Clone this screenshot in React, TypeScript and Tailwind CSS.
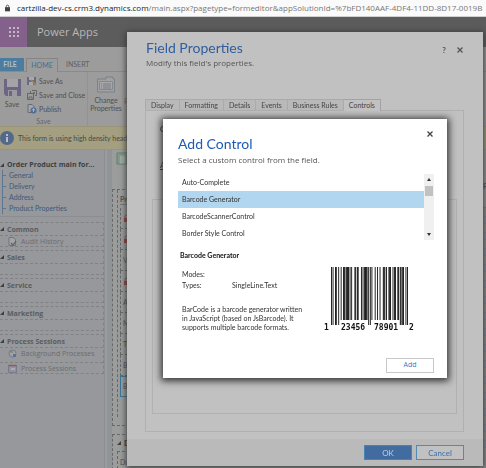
import type { ReactNode } from "react";

const L_CODES = [
  "0001101", "0011001", "0010011", "0111101", "0100011",
  "0110001", "0101111", "0111011", "0110111", "0001011",
];
const invert = (bits: string) => [...bits].map((b) => (b === "1" ? "0" : "1")).join("");

/** UPC-A symbol: guards and the outer digits have the longer bars. */
function Barcode({ value }: { value: string }) {
  const digits = [...value].map(Number);
  const left = digits.slice(0, 6).map((d) => L_CODES[d]).join("");
  const right = digits.slice(6).map((d) => invert(L_CODES[d])).join("");
  const bits = "101" + left + "01010" + right + "101";
  const isLong = (i: number) => i < 10 || i > 84 || (i >= 45 && i < 50);
  return (
    <svg viewBox="0 0 92 66" className="h-[66px] w-[92px]" role="img" aria-label={"Barcode " + value}>
      <g transform="translate(7 0) scale(0.81 1)">
        {[...bits].map((b, i) =>
          b === "1" ? <rect key={i} x={i} y={0} width={1.05} height={isLong(i) ? 58 : 53} fill="#000" /> : null,
        )}
      </g>
      <g fill="#111" fontSize="8" fontWeight="700" fontFamily="'DejaVu Sans Mono', monospace">
        <text x="0" y="63">{value[0]}</text>
        <text x="17" y="63">{value.slice(1, 6)}</text>
        <text x="50" y="63">{value.slice(6, 11)}</text>
        <text x="85" y="63">{value[11]}</text>
      </g>
    </svg>
  );
}

function LockIcon() {
  return (
    <svg viewBox="0 0 8 8" className="size-2">
      <path d="M2 4V2.5a1.5 1.5 0 0 1 3 0" fill="none" stroke="#8d5555" />
      <rect x="1" y="4" width="6" height="4" fill="#9b3d3d" />
    </svg>
  );
}

function SaveIcon() {
  return (
    <svg viewBox="0 0 17 17" className="size-[17px]">
      <path d="M0 0h17v17H2L0 15z" fill="#6d6584" />
      <path d="M3 0h11v8H3z" fill="#a3a3a8" />
      <path d="M4 11h9v6H4z" fill="#9a9aa0" />
      <path d="M5 12h3v5H5z" fill="#6d6584" />
    </svg>
  );
}

function SaveAsIcon() {
  return (
    <svg viewBox="0 0 10 10" className="size-[10px]">
      <path d="M0 1h9v8H0z" fill="#6a6a88" />
      <path d="M2 1h5v3H2zM2 6h4v3H2z" fill="#a9a9ad" />
      <path d="M4 4l5 5" stroke="#a08a45" strokeWidth="1.5" />
    </svg>
  );
}

function SaveCloseIcon() {
  return (
    <svg viewBox="0 0 10 10" className="size-[10px]" fill="none" stroke="#666">
      <path d="M.5 3.500h6v6h-6zM2 9V7h3v2M3.500 3V1M5 .5h4.500v5H8" />
      <path d="M6 3h2M7 2v2" />
    </svg>
  );
}

function PublishIcon() {
  return (
    <svg viewBox="0 0 10 10" className="size-[10px]">
      <path d="M1 .5h4l2 2v6H1z" fill="#a5a5a8" stroke="#666c78" />
      <circle cx="6.500" cy="6.500" r="3" fill="#4d6b94" />
      <path d="M5 6.500l1.500-2 1.500 2M6.500 5v3" stroke="#a9b4c2" fill="none" />
    </svg>
  );
}

function PropertiesIcon() {
  return (
    <svg viewBox="0 0 18 17" className="h-[17px] w-[18px]">
      <path d="M9 3V1h7v2h1.500v13H.5V3z" fill="#9fa1a3" stroke="#7b8288" />
      <path d="M2.500 5.500h13v8h-13z" fill="#a8a8a8" stroke="#85898d" />
      <path d="M4 8h1M6 8h8M4 10h1M6 10h8M4 12h1M6 12h8" stroke="#747d85" />
    </svg>
  );
}

function NavIcon({ kind }: { kind: string }) {
  if (kind === "audit")
    return (
      <svg viewBox="0 0 9 9" className="size-[9px]">
        <path d="M1 .5h4l2.500 2v6H1z" fill="#a3a5a5" stroke="#737577" />
        <path d="M3 6l2 2 3-4" fill="none" stroke="#5c6064" strokeWidth="1.200" />
      </svg>
    );
  if (kind === "process")
    return (
      <svg viewBox="0 0 9 9" className="size-[9px]">
        <circle cx="4.500" cy="4.500" r="3.500" fill="#9da3a9" stroke="#6f7f93" />
        <path d="M1 3l3-2 1 3z" fill="#9a7c55" />
        <path d="M5 5h3v3H5z" fill="#5c7296" />
      </svg>
    );
  return (
    <svg viewBox="0 0 9 9" className="size-[9px]">
      <path d="M.5 1.500h8v7h-8z" fill="#8f91a0" stroke="#777b88" />
      <path d="M.5 1.500h8" stroke="#8c5d60" strokeWidth="1.500" />
      <path d="M3 5h4" stroke="#a9abb5" strokeWidth="2" />
    </svg>
  );
}

function Triangle() {
  return (
    <svg viewBox="0 0 4 4" className="size-1 shrink-0">
      <path d="M4 0v4H0z" fill="#3f3f3f" />
    </svg>
  );
}

function CloseIcon({ color }: { color: string }) {
  return (
    <svg viewBox="0 0 6 6" className="size-[6px]">
      <path d="M.5 .5l5 5M5.500 .5l-5 5" stroke={color} strokeWidth="1.300" />
    </svg>
  );
}

function NavGroup({ title, children }: { title: string; children?: ReactNode }) {
  return (
    <section className="mb-[3px] border-y border-r border-dashed border-[#808284]">
      <h3 className="flex h-3 items-center gap-[3px] font-bold text-[#5a5c5e]">
        <Triangle />
        {title}
      </h3>
      <div className="border-t border-dashed border-[#808284]">{children ?? <div className="h-[10px]" />}</div>
    </section>
  );
}

function NavLink({ kind, children }: { kind: string; children: ReactNode }) {
  return (
    <a href="#" className="flex h-[10px] items-center gap-1 pl-2 text-[#6b6d6f]">
      <NavIcon kind={kind} />
      {children}
    </a>
  );
}

function Sidebar() {
  const links = ["General", "Delivery", "Address", "Product Properties"];
  return (
    <nav className="w-[105px] shrink-0 border-r border-[#8b8d90] bg-[#96989b] pt-[9px] font-['Open_Sans','Noto_Sans',sans-serif] text-[7px] leading-[11px] whitespace-nowrap">
      <h2 className="flex items-center gap-[3px] text-[7px] font-bold text-[#3d3f41]">
        <Triangle />
        Order Product main for...
      </h2>
      <ul className="ml-[2px] border-l border-[#5c7591] font-[Lato,sans-serif]">
        {links.map((l) => (
          <li key={l} className="flex items-center gap-[3px]">
            <span className="h-px w-[3px] bg-[#5c7591]" />
            <a href="#" className="text-[#3f5878]">{l}</a>
          </li>
        ))}
      </ul>
      <div className="mt-[2px] mb-[5px] border-t border-[#8b8d90]" />
      <NavGroup title="Common"><NavLink kind="audit">Audit History</NavLink></NavGroup>
      <NavGroup title="Sales" />
      <NavGroup title="Service" />
      <NavGroup title="Marketing" />
      <NavGroup title="Process Sessions">
        <NavLink kind="process">Background Processes</NavLink>
        <div className="mt-1 border-t border-dashed border-[#808284]">
          <NavLink kind="session">Process Sessions</NavLink>
        </div>
      </NavGroup>
    </nav>
  );
}

const FIELDS = ["lock", "lock", "V", "lock", "A", "M", "T", "B"];

function FormCanvas() {
  return (
    <main className="flex min-w-0 flex-1 bg-[#9b9d9d] pl-[2px] text-[7px] text-[#505050]">
      <div className="w-[5px] shrink-0 bg-[#909497]" />
      <div className="min-w-0 flex-1">
        <div className="flex h-[39px] items-start pt-[2px] pl-1">
          <svg viewBox="0 0 12 14" className="h-[14px] w-3">
            <path d="M1 1h10v11H1z" fill="#939c95" stroke="#4f8562" />
            <path d="M3 3h5l2 2v7H3z" fill="#a1a9a2" stroke="#6f9079" />
          </svg>
        </div>
        <section className="h-[237px] border border-dashed border-[#686868] pb-2 pl-1">
          <div className="h-full border-l border-dashed border-[#686868] pt-1 pl-[2px]">
            <h3 className="mb-[3px] border-b border-[#777] leading-[10px] font-bold">Product</h3>
            {FIELDS.map((f, i) => (
              <div key={i} className="flex h-[21px] items-center border-b border-l border-dashed border-[#686868] pl-[2px]">
                {f === "lock" ? <LockIcon /> : f}
              </div>
            ))}
            <div className="flex h-[21px] items-center border border-[#39779a] pl-[2px]">B</div>
          </div>
        </section>
        <section className="mt-2 border border-dashed border-[#686868] pl-1">
          <h3 className="flex h-4 items-center gap-[3px] text-[8px] font-bold text-[#333]"><Triangle />Details</h3>
          <div className="h-[18px] border-t border-l border-dashed border-[#686868] pt-[5px] pl-[2px] leading-[10px]">Due</div>
        </section>
      </div>
      <aside className="w-[3px] shrink-0 overflow-hidden bg-[#8e8e8e]">
        <div className="h-[58px] border-b border-[#7b7b7b] bg-[#999] pt-8 leading-[8px] font-bold">F</div>
        {Array.from({ length: 15 }, (_, i) => (
          <div key={i} className="mt-2 h-2 border-y border-[#7d8390] bg-[#858b9b]" />
        ))}
      </aside>
    </main>
  );
}

function Ribbon() {
  const small = "flex items-center gap-[2px]";
  return (
    <div className="bg-[#9c9c9c] pt-[11px] whitespace-nowrap text-[#505050]">
      <div className="flex h-[14px] border-b border-[#8a8a8a] text-[7px]">
        <button className="w-6 bg-[#4a7d9f] pr-1 text-[7px] font-bold text-[#b3bfc7]">FILE</button>
        <button className="mb-[-1px] ml-[2px] w-8 border border-b-0 border-[#858585] bg-[#9c9c9c] text-[#3f6f95]">HOME</button>
        <button className="ml-2 text-[#606060]">INSERT</button>
      </div>
      <div className="flex h-[54px] text-[7px] leading-[8px]">
        <div className="flex w-[88px] flex-col border-r border-[#929292]">
          <div className="flex flex-1 pt-1">
            <button className="flex h-[34px] w-6 flex-col items-center gap-1 pt-[3px]">
              <SaveIcon />
              Save
            </button>
            <div className="ml-[3px] flex flex-col gap-1">
              <button className={small}><SaveAsIcon />Save As</button>
              <button className={small}><SaveCloseIcon />Save and Close</button>
              <button className={small}><PublishIcon />Publish</button>
            </div>
          </div>
          <p className="pb-px text-center text-[#666]">Save</p>
        </div>
        <button className="flex w-9 flex-col items-center gap-[3px] pt-1">
          <PropertiesIcon />
          <span>Change<br />Properties</span>
        </button>
        <button className="pt-1 text-[#666]">Remove</button>
      </div>
    </div>
  );
}

const TABS = ["Display", "Formatting", "Details", "Events", "Business Rules", "Controls"];
const CONTROLS = ["Auto-Complete", "Barcode Generator", "BarcodeScannerControl", "Border Style Control"];

function AddControlDialog() {
  return (
    <div role="dialog" aria-label="Add Control" className="absolute top-[87px] right-9 bottom-[88px] left-9 flex flex-col bg-white pr-[13px] pl-[15px] text-[7px] text-[#333] shadow-[0_1px_7px_2px_#333]">
      <header className="flex items-start justify-between pt-[14px]">
        <div>
          <h2 className="text-[14px] leading-[22px] text-[#1b5cb4]">Add Control</h2>
          <p className="font-['Open_Sans','Noto_Sans',sans-serif] text-[8px] leading-[10px] text-[#555]">Select a custom control from the field.</p>
        </div>
        <button aria-label="Close" className="-mt-[2px] pr-px"><CloseIcon color="#444" /></button>
      </header>
      <div className="mt-[9px] flex">
        <ul className="min-w-0 flex-1">
          {CONTROLS.map((c) => (
            <li key={c}>
              <button className={"flex h-[17px] w-full items-center pl-1 " + (c === "Barcode Generator" ? "bg-[#b1d6f0]" : "")}>{c}</button>
            </li>
          ))}
        </ul>
        <div className="mb-[2px] flex w-[10px] flex-col items-center bg-[#f0f0f0] py-1">
          <svg viewBox="0 0 4 3" className="h-[3px] w-1"><path d="M2 0l2 3H0z" fill="#333" /></svg>
          <div className="mt-[5px] h-[10px] w-2 bg-[#c1c1c1]" />
          <svg viewBox="0 0 4 3" className="mt-auto h-[3px] w-1"><path d="M2 3l2-3H0z" fill="#333" /></svg>
        </div>
      </div>
      <h3 className="mt-2 pl-[2px] leading-[10px] font-bold text-[#111]">Barcode Generator</h3>
      <div className="flex flex-1 justify-between pr-[18px] pl-1">
        <div className="pt-[9px]">
          <dl className="grid grid-cols-[50px_1fr] leading-[11px]">
            <dt>Modes:</dt><dd />
            <dt>Types:</dt><dd>SingleLine.Text</dd>
          </dl>
          <p className="mt-[14px] w-[122px] leading-[9px]">
            BarCode is a barcode generator written in JavaScript (based on JsBarcode). It supports multiple barcode formats.
          </p>
        </div>
        <div className="pt-[7px]"><Barcode value="123456789012" /></div>
      </div>
      <button className="mb-[5px] h-[15px] w-12 self-end border border-[#c8c8c8] bg-white font-['Open_Sans','Noto_Sans',sans-serif] text-[#3b73d1]">Add</button>
    </div>
  );
}

function FieldProperties() {
  return (
    <div role="dialog" aria-label="Field Properties" className="fixed top-8 right-[3px] bottom-[2px] left-[127px] flex flex-col bg-[#c1c1c1] shadow-[0_1px_6px_1px_#3a3a3a]">
      <header className="flex items-start justify-between pt-[5px] pr-5 pl-[19px]">
        <div>
          <h1 className="text-[14px] leading-[21px] text-[#2f5d9f]">Field Properties</h1>
          <p className="font-['Open_Sans','Noto_Sans',sans-serif] text-[8px] leading-[10px] text-[#555]">Modify this field's properties.</p>
        </div>
        <div className="mt-2 flex items-center gap-[11px]">
          <button aria-label="Help" className="text-[8px] leading-[10px] font-bold text-[#555]">?</button>
          <button aria-label="Close"><CloseIcon color="#555" /></button>
        </div>
      </header>
      <div className="mt-[31px] ml-[18px] flex h-3 text-[7px] whitespace-nowrap text-[#444]" role="tablist">
        {TABS.map((t) => (
          <button
            key={t}
            role="tab"
            aria-selected={t === "Controls"}
            className={
              "border-t border-r px-[5px] first:border-l " +
              (t === "Controls" ? "relative z-10 border-[#a2a2a2] bg-[#c1c1c1]" : "border-[#aaa] bg-[#b9b9b9]")
            }
          >
            {t}
          </button>
        ))}
      </div>
      <div className="-mt-px mr-[19px] mb-[7px] ml-[18px] flex flex-1 flex-col border border-[#b0b0b0] px-[6px] pb-[17px]">
        <div className="h-[88px] pt-3 pl-2 text-[8px] leading-[12px] text-[#333]">
          <p className="font-bold">Control</p>
          <a href="#" className="mt-6 block underline">Add</a>
        </div>
        <div className="flex-1 border border-[#b1b1b1]" />
      </div>
      <footer className="flex h-[27px] gap-1 bg-[#bababa] pt-[6px] pr-[19px] text-[8px]">
        <button className="ml-auto h-[15px] w-12 border border-[#4a83b2] bg-[#426ca0] text-[#c4ccd6]">OK</button>
        <button className="h-[15px] w-12 border border-[#4f8ab8] bg-[#c1c1c1] text-[#3d70aa]">Cancel</button>
      </footer>
      <AddControlDialog />
    </div>
  );
}

export default function App() {
  return (
    <div className="flex h-screen min-h-[460px] flex-col overflow-hidden font-[Lato,sans-serif]">
      <div className="flex h-[17px] shrink-0 items-center gap-[7px] overflow-hidden border-b border-[#d0d0d0] bg-[#fafafa] pl-[5px] font-['Open_Sans','Noto_Sans',sans-serif] text-[8px] whitespace-nowrap">
        <svg viewBox="0 0 6 8" className="h-2 w-[5px] shrink-0">
          <path d="M1.500 3.500V2a1.500 1.500 0 0 1 3 0v1.500" fill="none" stroke="#444" />
          <path d="M0 3h6v5H0z" fill="#444" />
        </svg>
        <p className="text-[#777]">
          <span className="text-[#222]">cartzilla-dev-cs.crm3.dynamics.com</span>
          /main.aspx?pagetype=formeditor&amp;appSolutionId=%7bFD140AAF-4DF4-11DD-8D17-0019B
        </p>
      </div>
      <header className="flex h-[30px] shrink-0 items-center bg-[#5c5c5c]">
        <button aria-label="App launcher" className="grid h-full w-[27px] place-items-center bg-[#83618a]">
          <svg viewBox="0 0 10 10" className="size-[10px]" fill="#c4b6c6">
            {[0, 4, 8].map((y) => [0, 4, 8].map((x) => <rect key={x + "-" + y} x={x} y={y} width="2" height="2" />))}
          </svg>
        </button>
        <span className="pl-[10px] font-['Open_Sans','Noto_Sans',sans-serif] text-[11px] text-[#b8b8b8]">Power Apps</span>
      </header>
      <Ribbon />
      <div className="flex h-6 shrink-0 items-center gap-1 overflow-hidden border-y border-[#99957a] bg-[#a39f80] text-[7px] whitespace-nowrap text-[#484848]">
        <svg viewBox="0 0 14 14" className="size-[14px] shrink-0">
          <circle cx="7" cy="7" r="7" fill="#52698c" />
          <path d="M7 3v2M7 6v5" stroke="#b5bdca" strokeWidth="2" />
        </svg>
        This form is using high density headers.
      </div>
      <div className="flex min-h-0 flex-1">
        <Sidebar />
        <FormCanvas />
      </div>
      <FieldProperties />
    </div>
  );
}
